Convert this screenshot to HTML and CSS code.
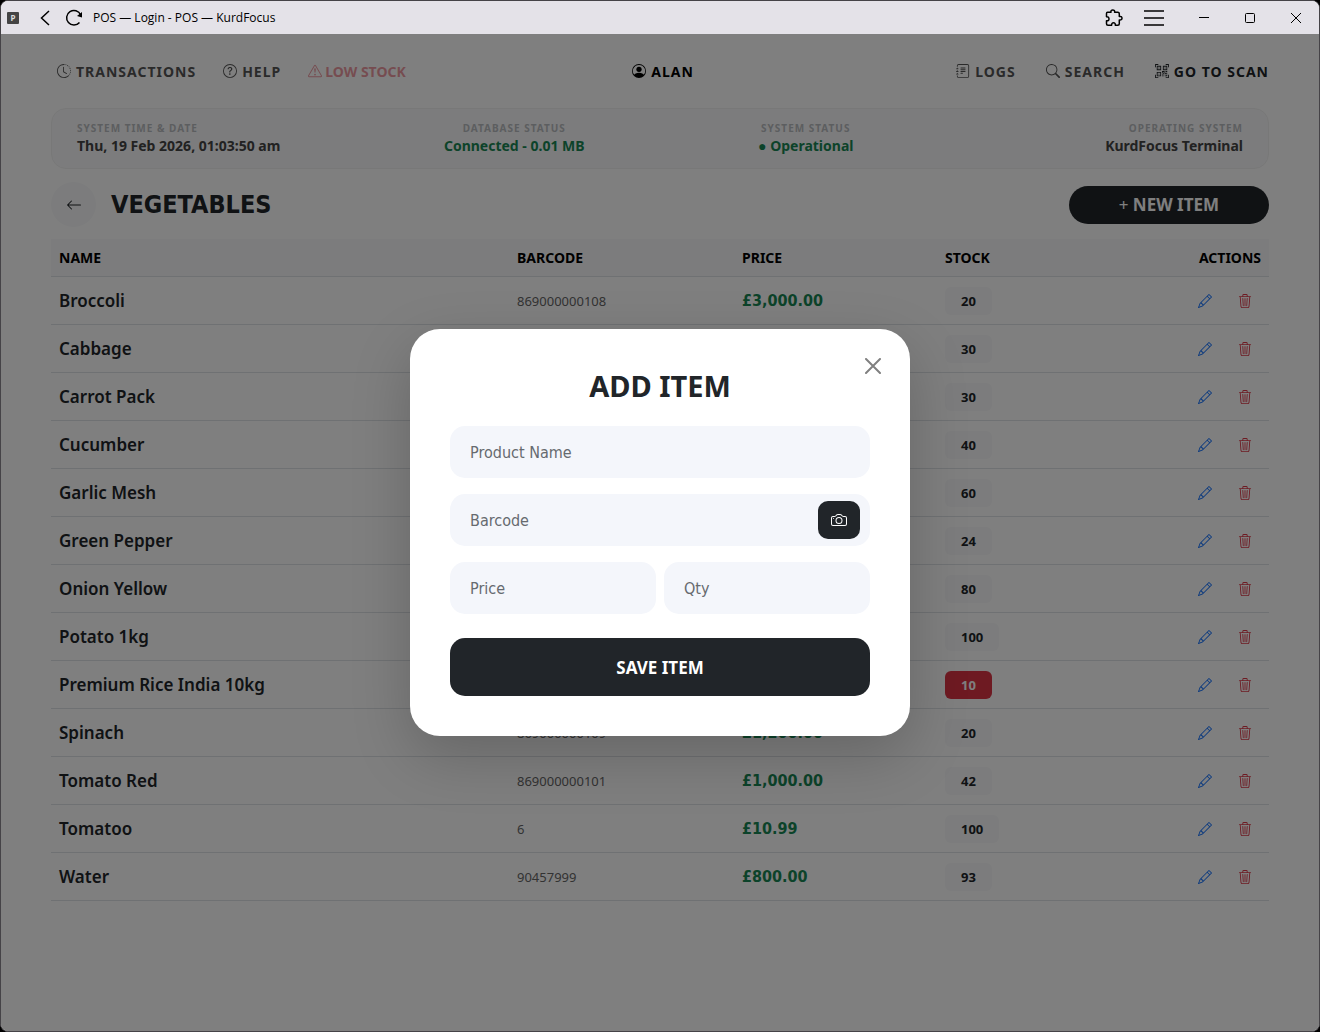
FILE: index.html
```
<!DOCTYPE html>
<html lang="en">
<head>
  <meta charset="UTF-8">
  <meta name="viewport" content="width=device-width, initial-scale=1">
  <title>POS — KurdFocus</title>
  <link rel="stylesheet" href="styles.css">
</head>
<body>
  <!-- Icon set -->
  <svg class="icon-set" aria-hidden="true">
    <symbol id="clock" viewBox="0 0 16 16">
      <path d="M8.515 1.019A7 7 0 0 0 8 1V0a8 8 0 0 1 .589.022zm2.004.45a7 7 0 0 0-.985-.299l.219-.976q.576.129 1.126.342zm1.37.71a7 7 0 0 0-.439-.27l.493-.87a8 8 0 0 1 .979.654l-.615.789a7 7 0 0 0-.418-.302zm1.834 1.79a7 7 0 0 0-.653-.796l.724-.69q.406.429.747.91zm.744 1.352a7 7 0 0 0-.214-.468l.893-.45a8 8 0 0 1 .45 1.088l-.95.313a7 7 0 0 0-.179-.483m.53 2.507a7 7 0 0 0-.1-1.025l.985-.17q.1.58.116 1.17zm-.131 1.538q.05-.254.081-.51l.993.123a8 8 0 0 1-.23 1.155l-.964-.267q.069-.247.12-.501m-.952 2.379q.276-.436.486-.908l.914.405q-.24.54-.555 1.038zm-.964 1.205q.183-.183.35-.378l.758.653a8 8 0 0 1-.401.432z"/>
      <path d="M8 1a7 7 0 1 0 4.95 11.95l.707.707A8.001 8.001 0 1 1 8 0z"/>
      <path d="M7.5 3a.5.5 0 0 1 .5.5v5.21l3.248 1.856a.5.5 0 0 1-.496.868l-3.5-2A.5.5 0 0 1 7 9V3.5a.5.5 0 0 1 .5-.5"/>
    </symbol>
    <symbol id="help" viewBox="0 0 16 16">
      <path d="M8 15A7 7 0 1 1 8 1a7 7 0 0 1 0 14m0 1A8 8 0 1 0 8 0a8 8 0 0 0 0 16"/>
      <path d="M5.255 5.786a.237.237 0 0 0 .241.247h.825c.138 0 .248-.113.266-.25.09-.656.54-1.134 1.342-1.134.686 0 1.314.343 1.314 1.168 0 .635-.374.927-.965 1.371-.673.489-1.206 1.06-1.168 1.987l.003.217a.25.25 0 0 0 .25.246h.811a.25.25 0 0 0 .25-.25v-.105c0-.718.273-.927 1.01-1.486.609-.463 1.244-.977 1.244-2.056 0-1.511-1.276-2.241-2.673-2.241-1.267 0-2.655.59-2.75 2.286m1.557 5.763c0 .533.425.927 1.01.927.609 0 1.028-.394 1.028-.927 0-.552-.42-.94-1.029-.94-.584 0-1.009.388-1.009.94"/>
    </symbol>
    <symbol id="warning" viewBox="0 0 16 16">
      <path d="M7.938 2.016A.13.13 0 0 1 8.002 2a.13.13 0 0 1 .063.016.15.15 0 0 1 .054.057l6.857 11.667c.036.06.035.124.002.183a.2.2 0 0 1-.054.06.1.1 0 0 1-.066.017H1.146a.1.1 0 0 1-.066-.017.2.2 0 0 1-.054-.06.18.18 0 0 1 .002-.183L7.884 2.073a.15.15 0 0 1 .054-.057m1.044-.45a1.13 1.13 0 0 0-1.96 0L.165 13.233c-.457.778.091 1.767.98 1.767h13.713c.889 0 1.438-.99.98-1.767z"/>
      <path d="M7.002 12a1 1 0 1 1 2 0 1 1 0 0 1-2 0M7.1 5.995a.905.905 0 1 1 1.8 0l-.35 3.507a.552.552 0 0 1-1.1 0z"/>
    </symbol>
    <symbol id="person" viewBox="0 0 16 16">
      <path d="M11 6a3 3 0 1 1-6 0 3 3 0 0 1 6 0"/>
      <path fill-rule="evenodd" d="M0 8a8 8 0 1 1 16 0A8 8 0 0 1 0 8m8-7a7 7 0 0 0-5.468 11.37C3.242 11.226 4.805 10 8 10s4.757 1.225 5.468 2.37A7 7 0 0 0 8 1"/>
    </symbol>
    <symbol id="journal" viewBox="0 0 16 16">
      <path d="M5 10.5a.5.5 0 0 1 .5-.5h2a.5.5 0 0 1 0 1h-2a.5.5 0 0 1-.5-.5m0-2a.5.5 0 0 1 .5-.5h5a.5.5 0 0 1 0 1h-5a.5.5 0 0 1-.5-.5m0-2a.5.5 0 0 1 .5-.5h5a.5.5 0 0 1 0 1h-5a.5.5 0 0 1-.5-.5m0-2a.5.5 0 0 1 .5-.5h5a.5.5 0 0 1 0 1h-5a.5.5 0 0 1-.5-.5"/>
      <path d="M3 0h10a2 2 0 0 1 2 2v12a2 2 0 0 1-2 2H3a2 2 0 0 1-2-2v-1h1v1a1 1 0 0 0 1 1h10a1 1 0 0 0 1-1V2a1 1 0 0 0-1-1H3a1 1 0 0 0-1 1v1H1V2a2 2 0 0 1 2-2"/>
      <path d="M1 5v-.5a.5.5 0 0 1 1 0V5h.5a.5.5 0 0 1 0 1h-2a.5.5 0 0 1 0-1zm0 3v-.5a.5.5 0 0 1 1 0V8h.5a.5.5 0 0 1 0 1h-2a.5.5 0 0 1 0-1zm0 3v-.5a.5.5 0 0 1 1 0v.5h.5a.5.5 0 0 1 0 1h-2a.5.5 0 0 1 0-1z"/>
    </symbol>
    <symbol id="search" viewBox="0 0 16 16">
      <path d="M11.742 10.344a6.5 6.5 0 1 0-1.397 1.398h-.001q.044.06.098.115l3.85 3.85a1 1 0 0 0 1.415-1.414l-3.85-3.85a1 1 0 0 0-.115-.1zM12 6.5a5.5 5.5 0 1 1-11 0 5.5 5.5 0 0 1 11 0"/>
    </symbol>
    <symbol id="scan" viewBox="0 0 16 16">
      <path d="M0 .5A.5.5 0 0 1 .5 0h3a.5.5 0 0 1 0 1H1v2.500a.5.5 0 0 1-1 0zm12 0a.5.5 0 0 1 .5-.5h3a.5.5 0 0 1 .5.5v3a.5.5 0 0 1-1 0V1h-2.500a.5.5 0 0 1-.5-.5M.5 12a.5.5 0 0 1 .5.5V15h2.500a.5.5 0 0 1 0 1h-3a.5.5 0 0 1-.5-.5v-3a.5.5 0 0 1 .5-.5m15 0a.5.5 0 0 1 .5.5v3a.5.5 0 0 1-.5.5h-3a.5.5 0 0 1 0-1H15v-2.500a.5.5 0 0 1 .5-.5M4 4h1v1H4z"/>
      <path d="M7 2H2v5h5zM3 3h3v3H3zm2 8H4v1h1z"/>
      <path d="M7 9H2v5h5zm-4 1h3v3H3zm8-6h1v1h-1z"/>
      <path d="M9 2h5v5H9zm1 1v3h3V3zM8 8v2h1v1H8v1h2v-2h1v2h1v-1h2v-1h-3V8zm2 2H9V9h1zm4 2h-1v1h-2v1h3zm-4 2v-1H8v1z"/>
      <path d="M12 9h2V8h-2z"/>
    </symbol>
    <symbol id="arrow" viewBox="0 0 16 16">
      <path fill-rule="evenodd" d="M15 8a.5.5 0 0 0-.5-.5H2.707l3.147-3.146a.5.5 0 1 0-.708-.708l-4 4a.5.5 0 0 0 0 .708l4 4a.5.5 0 0 0 .708-.708L2.707 8.500H14.500A.5.5 0 0 0 15 8"/>
    </symbol>
    <symbol id="pencil" viewBox="0 0 16 16">
      <path d="M12.146.146a.5.5 0 0 1 .708 0l3 3a.5.5 0 0 1 0 .708l-10 10a.5.5 0 0 1-.168.11l-5 2a.5.5 0 0 1-.65-.65l2-5a.5.5 0 0 1 .11-.168zM11.207 2.500 13.500 4.793 14.793 3.500 12.500 1.207zm1.586 3L10.500 3.207 4 9.707V10h.5a.5.5 0 0 1 .5.5v.5h.5a.5.5 0 0 1 .5.5v.5h.293zm-9.761 5.175-.106.106-1.528 3.821 3.821-1.528.106-.106A.5.5 0 0 1 5 12.500V12h-.5a.5.5 0 0 1-.5-.5V11h-.5a.5.5 0 0 1-.468-.325"/>
    </symbol>
    <symbol id="trash" viewBox="0 0 16 16">
      <path d="M6.500 1h3a.5.5 0 0 1 .5.5v1H6v-1a.5.5 0 0 1 .5-.5M11 2.500v-1A1.500 1.500 0 0 0 9.500 0h-3A1.500 1.500 0 0 0 5 1.500v1H1.500a.5.5 0 0 0 0 1h.538l.853 10.660A2 2 0 0 0 4.885 16h6.230a2 2 0 0 0 1.994-1.840l.853-10.660h.538a.5.5 0 0 0 0-1zm1.958 1-.846 10.580a1 1 0 0 1-.997.920h-6.230a1 1 0 0 1-.997-.920L3.042 3.500zm-7.487 1a.5.5 0 0 1 .528.470l.5 8.500a.5.5 0 0 1-.998.060L5 5.030a.5.5 0 0 1 .470-.530Zm5.058 0a.5.5 0 0 1 .470.530l-.5 8.500a.5.5 0 1 1-.998-.060l.5-8.500a.5.5 0 0 1 .528-.470M8 4.500a.5.5 0 0 1 .5.5v8.500a.5.5 0 0 1-1 0V5a.5.5 0 0 1 .5-.5"/>
    </symbol>
    <symbol id="camera" viewBox="0 0 16 16">
      <path d="M15 12a1 1 0 0 1-1 1H2a1 1 0 0 1-1-1V6a1 1 0 0 1 1-1h1.172a3 3 0 0 0 2.120-.879l.830-.828A1 1 0 0 1 6.827 3h2.344a1 1 0 0 1 .707.293l.828.828A3 3 0 0 0 12.828 5H14a1 1 0 0 1 1 1zM2 4a2 2 0 0 0-2 2v6a2 2 0 0 0 2 2h12a2 2 0 0 0 2-2V6a2 2 0 0 0-2-2h-1.172a2 2 0 0 1-1.414-.586l-.828-.828A2 2 0 0 0 9.172 2H6.828a2 2 0 0 0-1.414.586l-.828.828A2 2 0 0 1 3.172 4z"/>
      <path d="M8 11a2.500 2.500 0 1 1 0-5 2.500 2.500 0 0 1 0 5m0 1a3.500 3.500 0 1 0 0-7 3.500 3.500 0 0 0 0 7M3 6.500a.5.5 0 1 1-1 0 .5.5 0 0 1 1 0"/>
    </symbol>
  </svg>

  <div class="window">
    <!-- Title bar -->
    <header class="titlebar">
      <span class="app-icon">P</span>
      <button class="tb-btn tb-back" aria-label="Back">
        <svg width="10" height="16" viewBox="0 0 10 16"><path d="M9 1 1.500 8 9 15" fill="none" stroke="#000" stroke-width="1.500"/></svg>
      </button>
      <button class="tb-btn tb-reload" aria-label="Reload">
        <svg width="18" height="18" viewBox="0 0 18 18"><path d="M14.500 13.500A7.300 7.300 0 1 1 15.600 5.800" fill="none" stroke="#000" stroke-width="1.500"/><path d="M17 3v5.500l-5-1.500z"/></svg>
      </button>
      <span class="tb-title">POS — Login - POS — KurdFocus</span>
      <button class="tb-btn tb-tool" aria-label="Extensions">
        <svg width="18" height="18" viewBox="0 0 18 18"><path d="M2.500 3.200H6C5.600 1.800 6.600 1 7.800 1s2.200.8 1.800 2.200h3.200q1.500 0 1.500 1.500v2.800c1.600-.4 2.700.4 2.700 1.700s-1.100 2.100-2.700 1.700v3.800q0 1.500-1.500 1.500h-2.500c.2-1.600-.6-2.500-1.800-2.500s-2 .9-1.800 2.500H3q-1.500 0-1.500-1.500v-3c1.700.3 2.500-.5 2.500-1.700S3.200 7.400 1.500 7.700V4.500q0-1.300 1-1.300z" fill="none" stroke="#000" stroke-width="1.500" stroke-linejoin="round"/></svg>
      </button>
      <button class="tb-btn tb-tool tb-menu" aria-label="Menu">
        <svg width="20" height="16" viewBox="0 0 20 16"><path d="M0 1h20M0 8h20M0 15h20" stroke="#000" stroke-width="1.500"/></svg>
      </button>
      <button class="tb-btn tb-win" aria-label="Minimize">
        <svg width="10" height="10" viewBox="0 0 10 10"><path d="M0 4.500h10" stroke="#000"/></svg>
      </button>
      <button class="tb-btn tb-win" aria-label="Maximize">
        <svg width="10" height="10" viewBox="0 0 10 10"><rect x=".5" y=".5" width="9" height="9" rx="1" fill="none" stroke="#000"/></svg>
      </button>
      <button class="tb-btn tb-win" aria-label="Close window">
        <svg width="10" height="10" viewBox="0 0 10 10"><path d="M0 0l10 10M10 0L0 10" stroke="#000"/></svg>
      </button>
    </header>

    <main class="page">
      <nav class="nav">
        <div class="nav-group">
          <a href="#"><svg class="icon"><use href="#clock"/></svg>TRANSACTIONS</a>
          <a href="#"><svg class="icon"><use href="#help"/></svg>HELP</a>
          <a href="#" class="low-stock"><svg class="icon"><use href="#warning"/></svg>LOW STOCK</a>
        </div>
        <a href="#" class="user"><svg class="icon"><use href="#person"/></svg>ALAN</a>
        <div class="nav-group nav-right">
          <a href="#"><svg class="icon"><use href="#journal"/></svg>LOGS</a>
          <a href="#"><svg class="icon"><use href="#search"/></svg>SEARCH</a>
          <a href="#" class="scan"><svg class="icon"><use href="#scan"/></svg>GO TO SCAN</a>
        </div>
      </nav>

      <section class="status">
        <div>
          <small>SYSTEM TIME &amp; DATE</small>
          <strong>Thu, 19 Feb 2026, 01:03:50 am</strong>
        </div>
        <div>
          <small>DATABASE STATUS</small>
          <strong class="ok">Connected - 0.01 MB</strong>
        </div>
        <div>
          <small>SYSTEM STATUS</small>
          <strong class="ok">● Operational</strong>
        </div>
        <div>
          <small>OPERATING SYSTEM</small>
          <strong>KurdFocus Terminal</strong>
        </div>
      </section>

      <div class="heading">
        <a href="#" class="back" aria-label="Back to categories"><svg class="icon"><use href="#arrow"/></svg></a>
        <h1>VEGETABLES</h1>
        <button class="new-item"><span>+</span> NEW ITEM</button>
      </div>

      <table class="items">
        <thead>
          <tr>
            <th>NAME</th>
            <th class="col-barcode">BARCODE</th>
            <th class="col-price">PRICE</th>
            <th class="col-stock">STOCK</th>
            <th class="col-actions">ACTIONS</th>
          </tr>
        </thead>
        <tbody id="itemRows"></tbody>
      </table>

      <!-- Add item dialog -->
      <div class="overlay">
        <form class="modal" role="dialog" aria-labelledby="modalTitle">
          <button type="button" class="modal-close" aria-label="Close">
            <svg width="16" height="16" viewBox="0 0 16 16"><path d="M1 1l14 14M15 1L1 15" stroke="#808080" stroke-width="2" stroke-linecap="round"/></svg>
          </button>
          <h2 id="modalTitle">ADD ITEM</h2>
          <div class="field">
            <input type="text" id="itemName" placeholder="Product Name" aria-label="Product Name" required>
          </div>
          <div class="field">
            <input type="text" id="itemBarcode" placeholder="Barcode" aria-label="Barcode">
            <button type="button" class="camera" aria-label="Scan barcode"><svg class="icon"><use href="#camera"/></svg></button>
          </div>
          <div class="field-row">
            <div class="field">
              <input type="text" id="itemPrice" placeholder="Price" aria-label="Price" required>
            </div>
            <div class="field">
              <input type="text" id="itemQty" placeholder="Qty" aria-label="Qty" required>
            </div>
          </div>
          <button type="submit" class="save">SAVE ITEM</button>
        </form>
      </div>
    </main>
  </div>

  <script>
    const items = [
      ['Broccoli', '869000000108', '£3,000.00', 20],
      ['Cabbage', '869000000107', '£1,000.00', 30],
      ['Carrot Pack', '869000000105', '£1,250.00', 30],
      ['Cucumber', '869000000102', '£1,000.00', 40],
      ['Garlic Mesh', '869000000110', '£2,000.00', 60],
      ['Green Pepper', '869000000106', '£1,500.00', 24],
      ['Onion Yellow', '869000000104', '£750.00', 80],
      ['Potato 1kg', '869000000103', '£1,000.00', 100],
      ['Premium Rice India 10kg', '869000000201', '£25,000.00', 10],
      ['Spinach', '869000000109', '£1,200.00', 20],
      ['Tomato Red', '869000000101', '£1,000.00', 42],
      ['Tomatoo', '6', '£10.99', 100],
      ['Water', '90457999', '£800.00', 93]
    ];

    document.getElementById('itemRows').innerHTML = items.map(([name, barcode, price, stock]) => `
      <tr>
        <td class="name">${name}</td>
        <td class="barcode">${barcode}</td>
        <td class="price">${price}</td>
        <td><span class="badge ${stock <= 10 ? 'low' : ''}">${stock}</span></td>
        <td>
          <div class="actions">
            <button class="edit" aria-label="Edit ${name}"><svg class="icon"><use href="#pencil"/></svg></button>
            <button class="delete" aria-label="Delete ${name}"><svg class="icon"><use href="#trash"/></svg></button>
          </div>
        </td>
      </tr>`).join('');
  </script>
</body>
</html>
```
FILE: styles.css
```
* {
  box-sizing: border-box;
}

body {
  margin: 0;
  background: #000;
  font-family: "Noto Sans", sans-serif;
  color: #212529;
}

button {
  border: 0;
  padding: 0;
  background: none;
  font-family: inherit;
  cursor: pointer;
}

a {
  color: inherit;
  text-decoration: none;
}

.icon-set {
  display: none;
}

.icon {
  width: 14px;
  height: 14px;
  fill: currentColor;
  flex: none;
}

.window {
  display: flex;
  flex-direction: column;
  min-height: 100vh;
  border: 1px solid #454347;
  border-radius: 8px;
  overflow: hidden;
  background: #fff;
}

/* title bar */
.titlebar {
  display: flex;
  align-items: center;
  height: 33px;
  padding-left: 6px;
  background: #e4e2e8;
}

.app-icon {
  width: 12px;
  height: 12px;
  border-radius: 1px;
  background: #444;
  color: #ddd;
  font-size: 8px;
  font-weight: 700;
  line-height: 12px;
  text-align: center;
}

.tb-btn {
  display: flex;
  align-items: center;
  justify-content: center;
  height: 33px;
}

.tb-back {
  width: 20px;
  margin-left: 16px;
}

.tb-reload {
  width: 28px;
  margin-left: 5px;
}

.tb-title {
  flex: 1;
  margin-left: 5px;
  font-family: "Open Sans", sans-serif;
  font-size: 12px;
  color: #000;
}

.tb-tool {
  width: 40px;
}

.tb-menu {
  margin-right: 7px;
}

.tb-win {
  width: 46px;
}

/* page */
.page {
  position: relative;
  flex: 1;
  padding: 22px 50px 50px;
}

.nav {
  display: grid;
  grid-template-columns: 1fr auto 1fr;
  align-items: center;
  height: 30px;
  margin-bottom: 22px;
  padding-left: 6px;
  font-size: 14px;
  font-weight: 700;
  letter-spacing: 1px;
  color: #555;
}

.nav a {
  display: flex;
  align-items: center;
  gap: 5px;
}

.nav-group {
  display: flex;
  gap: 27px;
}

.nav-right {
  justify-content: flex-end;
  gap: 30px;
}

.nav .low-stock {
  gap: 3px;
  color: #dc3545;
  letter-spacing: 0;
  opacity: .5;
}

.nav .user {
  color: #000;
}

.nav .scan {
  color: #212529;
}

.status {
  display: grid;
  grid-template-columns: repeat(4, 1fr);
  margin-bottom: 13px;
  padding: 12px 25px;
  border: 1px solid #f0f0f0;
  border-radius: 15px;
  background: #f8f9fa;
  text-align: center;
}

.status div:first-child {
  text-align: left;
}

.status div:last-child {
  text-align: right;
}

.status small {
  display: block;
  font-size: 10px;
  font-weight: 700;
  line-height: 15px;
  letter-spacing: 1px;
  color: #b8bcc0;
}

.status strong {
  display: block;
  font-size: 14px;
  line-height: 20px;
  color: #444;
}

.status .ok {
  color: #198754;
}

.heading {
  display: flex;
  align-items: center;
  gap: 15px;
  margin-bottom: 12px;
}

.back {
  display: flex;
  align-items: center;
  justify-content: center;
  width: 45px;
  height: 45px;
  border-radius: 50%;
  background: #f8f9fa;
}

.back .icon {
  width: 16px;
  height: 16px;
}

.heading h1 {
  flex: 1;
  margin: 0;
  font-family: "DejaVu Sans Condensed", "DejaVu Sans", sans-serif;
  font-size: 25px;
  line-height: 30px;
}

.new-item {
  height: 38px;
  padding: 0 50px;
  border-radius: 19px;
  background: #212529;
  color: #fff;
  font-size: 17px;
  font-weight: 700;
}

.new-item span {
  font-weight: 400;
}

/* items table */
.items {
  width: 100%;
  border-collapse: separate;
  border-spacing: 0;
  table-layout: fixed;
}

.items th {
  height: 38px;
  padding: 0 8px;
  border-bottom: 1px solid #dee2e6;
  background: #f8f9fa;
  color: #000;
  font-size: 14px;
  text-align: left;
}

.items td {
  height: 48px;
  padding: 0 8px;
  border-bottom: 1px solid #dee2e6;
}

.items .col-barcode {
  width: 225px;
}

.items .col-price {
  width: 203px;
}

.items .col-stock {
  width: 166px;
}

.items .col-actions {
  width: 166px;
  text-align: right;
}

.items .name {
  font-size: 17px;
  font-weight: 600;
}

.items .barcode {
  font-size: 13px;
  color: #666;
}

.items .price {
  font-family: "DejaVu Sans Condensed", "DejaVu Sans", sans-serif;
  font-size: 16px;
  font-weight: 700;
  color: #198754;
}

.badge {
  display: inline-block;
  padding: 0 16px;
  border-radius: 6px;
  background: #f8f9fa;
  font-size: 13px;
  font-weight: 700;
  line-height: 28px;
}

.badge.low {
  background: #dc3545;
  color: #fff;
}

.actions {
  display: flex;
  justify-content: flex-end;
  gap: 8px;
}

.actions button {
  display: flex;
  align-items: center;
  justify-content: center;
  width: 32px;
  height: 24px;
}

.edit {
  color: #0d6efd;
}

.delete {
  color: #dc3545;
}

/* add item dialog */
.overlay {
  position: absolute;
  inset: 0;
  display: flex;
  align-items: center;
  justify-content: center;
  background: rgba(0, 0, 0, .5);
}

.modal {
  position: relative;
  width: 500px;
  padding: 40px;
  border-radius: 30px;
  background: #fff;
  box-shadow: 0 20px 60px rgba(0, 0, 0, .2);
}

.modal h2 {
  margin: 0 0 24px;
  font-size: 29px;
  line-height: 33px;
  text-align: center;
}

.modal-close {
  position: absolute;
  top: 25px;
  right: 25px;
  display: flex;
  align-items: center;
  justify-content: center;
  width: 24px;
  height: 24px;
}

.field {
  position: relative;
  flex: 1;
  margin-bottom: 16px;
}

.field input {
  display: block;
  width: 100%;
  height: 52px;
  padding: 0 20px;
  border: 0;
  border-radius: 15px;
  background: #f4f6fb;
  font-family: "DejaVu Sans Condensed", "DejaVu Sans", sans-serif;
  font-size: 16px;
}

.field input::placeholder {
  color: #666a6f;
}

.field-row {
  display: flex;
  gap: 8px;
  margin-bottom: 8px;
}

.camera {
  position: absolute;
  top: 7px;
  right: 10px;
  display: flex;
  align-items: center;
  justify-content: center;
  width: 42px;
  height: 38px;
  border-radius: 10px;
  background: #212529;
  color: #fff;
}

.camera .icon {
  width: 16px;
  height: 16px;
}

.save {
  display: block;
  width: 100%;
  height: 58px;
  border-radius: 15px;
  background: #212529;
  color: #fff;
  font-size: 17px;
  font-weight: 700;
}
```
